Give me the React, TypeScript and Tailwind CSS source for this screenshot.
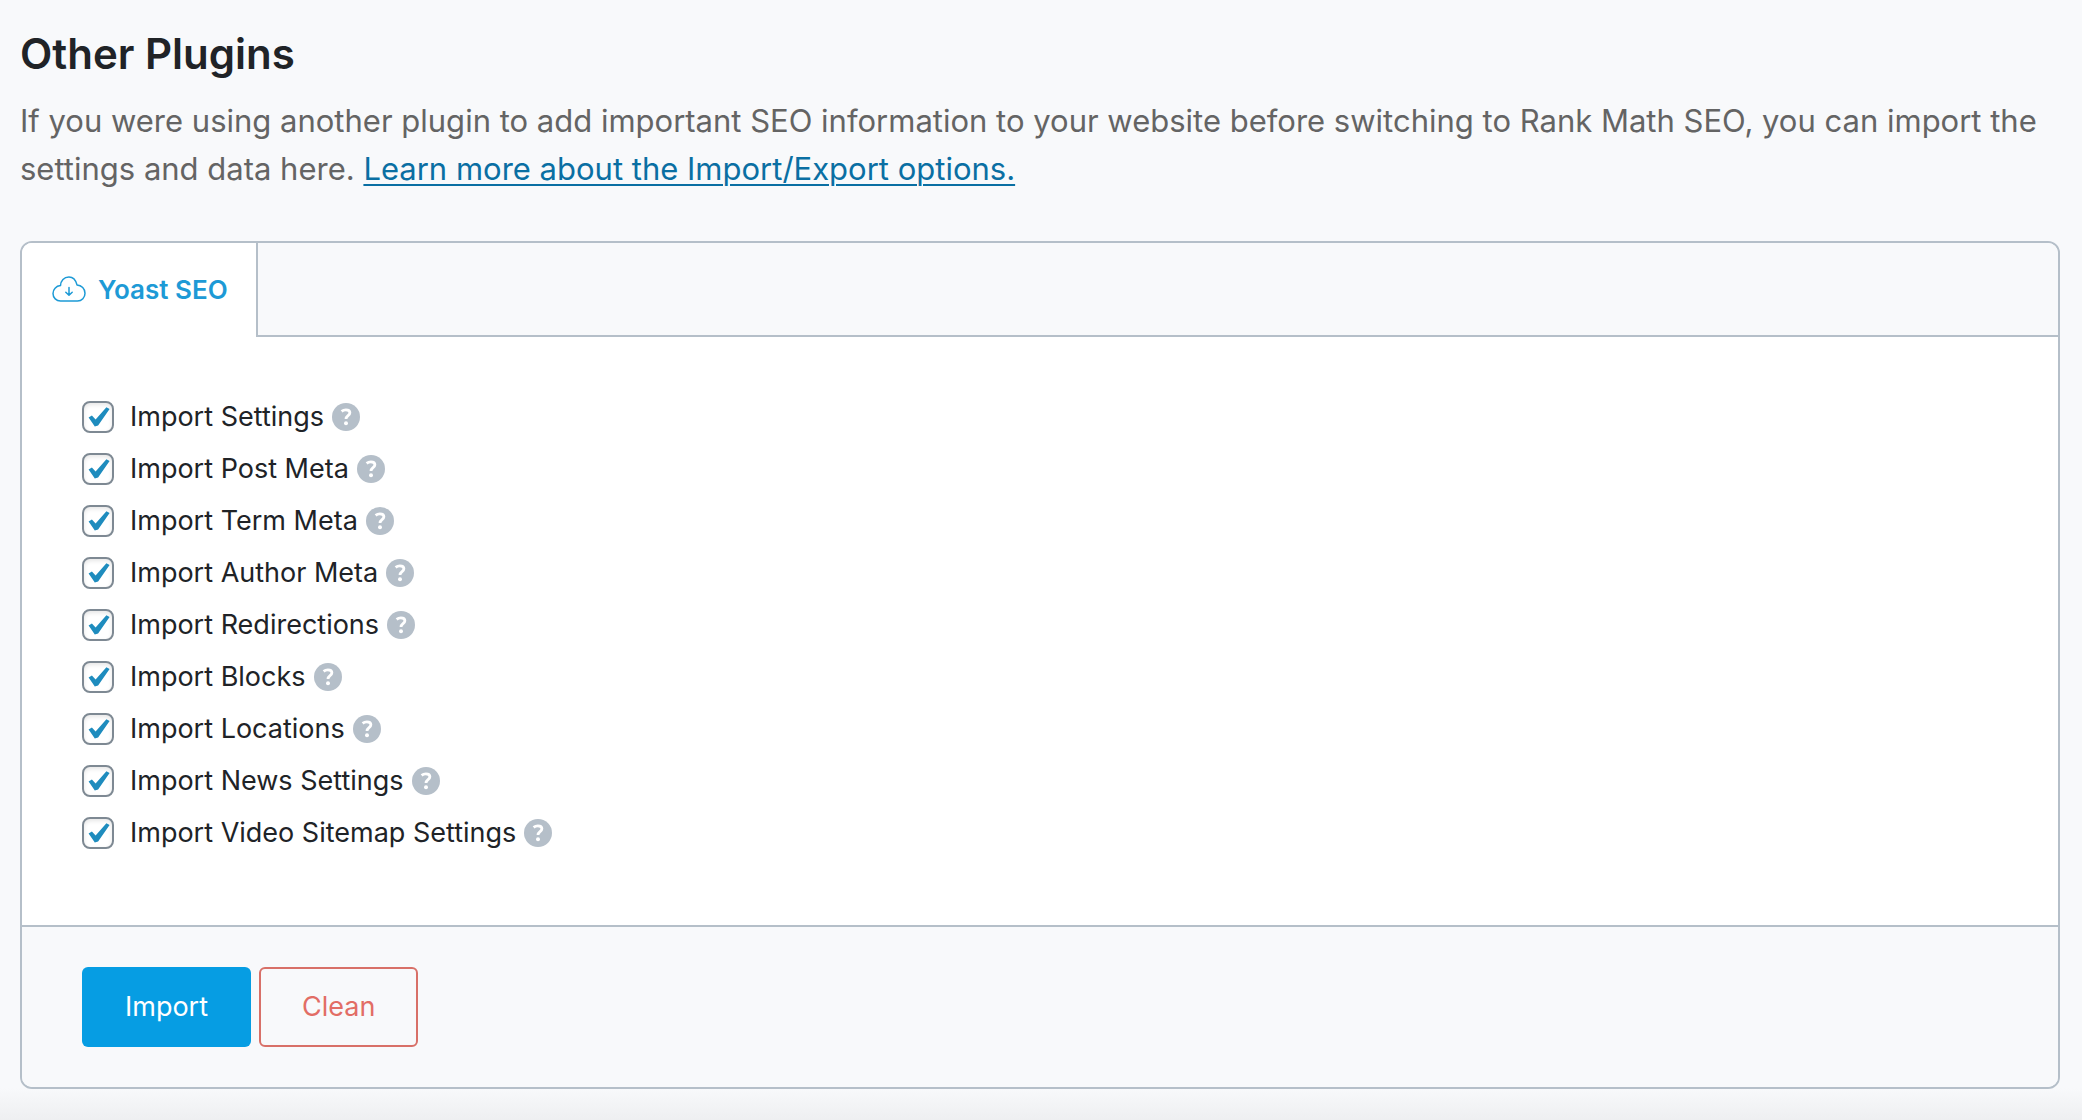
const options = [
  'Import Settings',
  'Import Post Meta',
  'Import Term Meta',
  'Import Author Meta',
  'Import Redirections',
  'Import Blocks',
  'Import Locations',
  'Import News Settings',
  'Import Video Sitemap Settings',
];

function CloudIcon() {
  return (
    <svg className="h-[26px] w-[34px]" viewBox="0 0 34 26" fill="none" stroke="currentColor" strokeWidth="1.5" strokeLinecap="round" strokeLinejoin="round" aria-hidden="true">
      <path d="M8.500 25H25.500a7.600 7.600 0 0 0 7.500-7.800c0-4.500-3.400-8-8-8.300C23.800 4.200 21 1 16.900 1c-4.900 0-8.200 3.600-8.400 8.600C4 10 1 13.500 1 17.400 1 21.800 4.400 25 8.500 25z" />
      <path d="M17 11.500v7.500M13.800 16.200l3.200 3 3.200-3" />
    </svg>
  );
}

function HelpButton({ label }: { label: string }) {
  return (
    <button type="button" aria-label={`Help: ${label}`} className="size-7 rounded-full text-[#b5bfc9]">
      <svg viewBox="0 0 28 28" className="size-7" fill="none" aria-hidden="true">
        <circle cx="14" cy="14" r="14" fill="currentColor" />
        <path d="M9.600 8.300c1.200-1 2.700-1.500 4.300-1.500 2.500 0 4 1.200 4 3 0 2.900-3.900 2.900-3.900 6.200" stroke="white" strokeWidth="2.800" />
        <circle cx="14" cy="20.300" r="2" fill="white" />
      </svg>
    </button>
  );
}

function Option({ label, id }: { label: string; id: string }) {
  return (
    <li className="flex h-[52px] items-center">
      <span className="relative mr-4 size-8">
        <input
          id={id}
          type="checkbox"
          defaultChecked
          className="peer block size-8 appearance-none rounded-lg border-2 border-[#7e8993] bg-white shadow-[inset_0_2px_4px_rgba(0,0,0,0.1)]"
        />
        <svg viewBox="0 0 32 32" className="pointer-events-none absolute inset-0 hidden size-8 peer-checked:block" aria-hidden="true">
          <path d="M6.600 16.400l3.300-2 3.700 4.100L24.400 6.300l3.200 1.600L16.100 24.600l-3.300.9z" fill="#1e8cbe" />
        </svg>
      </span>
      <label htmlFor={id} className="mr-2 text-[27px] leading-10">{label}</label>
      <HelpButton label={label} />
    </li>
  );
}

export default function App() {
  return (
    <main className="min-h-screen bg-[#f8f9fb] bg-[linear-gradient(to_top,#eeeff1,#f8f9fb_32px)] px-5 pt-7 pb-[31px] font-['Inter',sans-serif] text-[#202327]">
      <h1 className="text-[42px] leading-[52px] font-semibold">Other Plugins</h1>
      <p className="mt-[17px] text-[31px] leading-[48px] text-[#646464]">
        If you were using another plugin to add important SEO information to your website before switching to Rank Math SEO, you can import the settings and data here.{' '}
        <a href="#import-export" className="text-[#0a6fa3] underline decoration-2 underline-offset-4">Learn more about the Import/Export options.</a>
      </p>
      <section className="mt-12 mr-0.5 overflow-hidden rounded-xl border-2 border-[#b5bfc9] bg-white">
        <div role="tablist" className="flex h-[94px] bg-[#f8f9fb]">
          <button type="button" role="tab" aria-selected="true" className="flex items-center gap-3 border-r-2 border-[#b5bfc9] bg-white pr-7 pb-0.5 pl-[30px] text-[26px] font-semibold text-[#1d9ad6]">
            <CloudIcon />
            Yoast SEO
          </button>
          <div className="flex-1 border-b-2 border-[#b5bfc9]" />
        </div>
        <ul className="px-[60px] pt-[54px] pb-[66px]">
          {options.map((label, i) => (
            <Option key={label} label={label} id={`option-${i}`} />
          ))}
        </ul>
        <footer className="flex gap-2 border-t-2 border-[#b5bfc9] bg-[#f8f9fb] px-[60px] py-10">
          <button type="button" className="h-20 rounded-md bg-[#069de3] px-[43px] text-[27px] text-white">Import</button>
          <button type="button" className="h-20 rounded-md border-2 border-[#d87068] px-[41px] text-[27px] text-[#e26d65]">Clean</button>
        </footer>
      </section>
    </main>
  );
}
